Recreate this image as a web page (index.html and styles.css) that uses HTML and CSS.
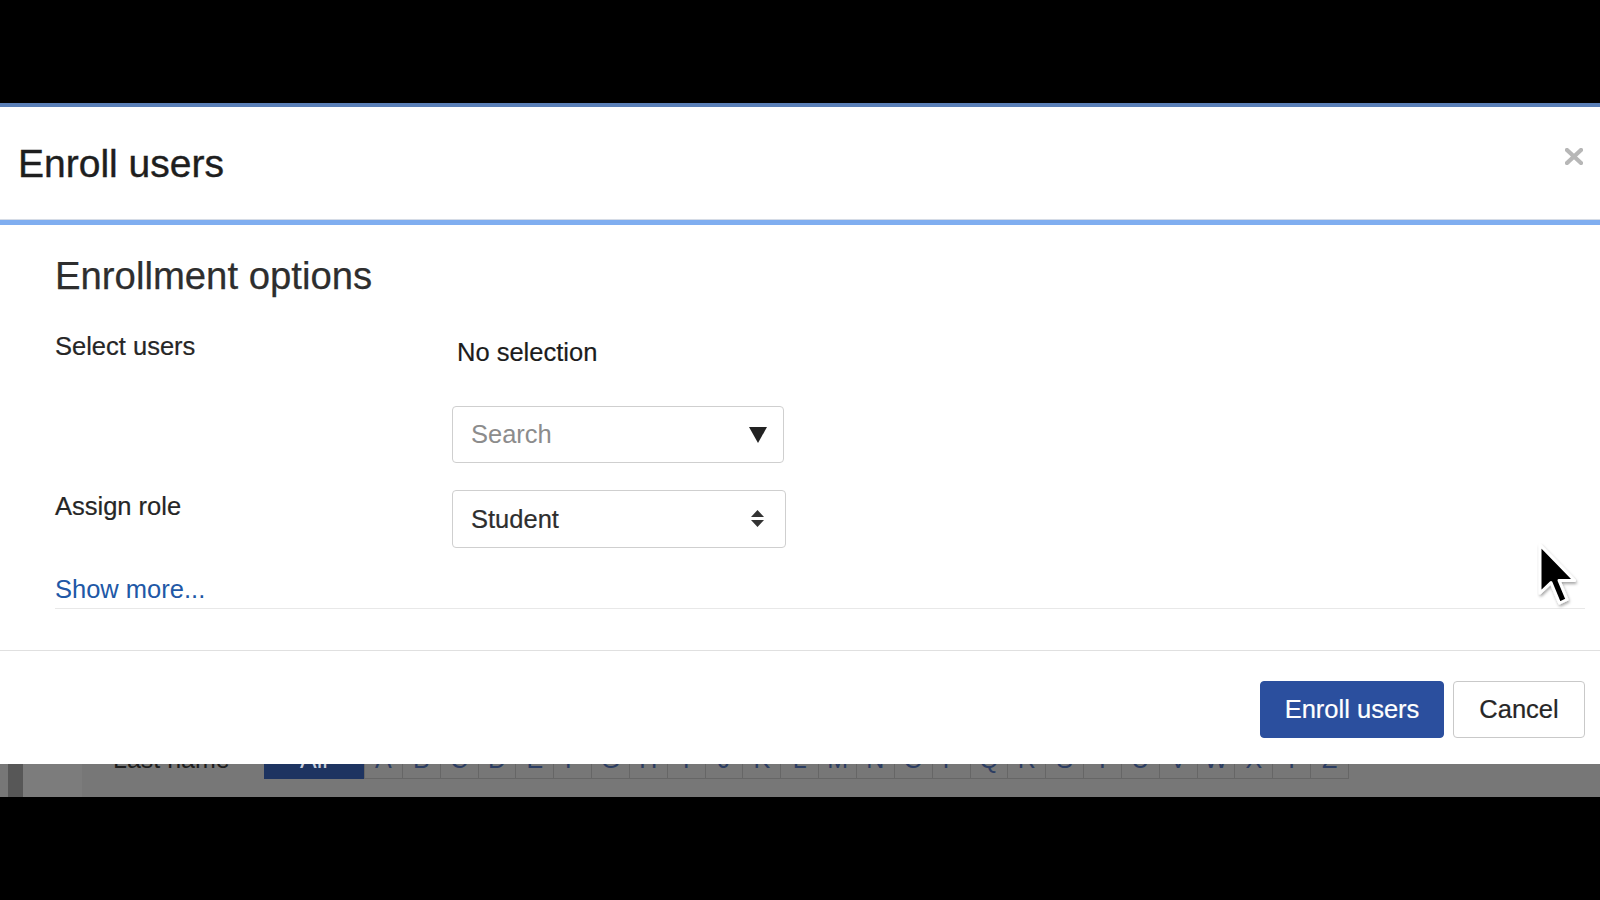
FILE: index.html
```html
<!DOCTYPE html>
<html lang="en">
<head>
<meta charset="utf-8">
<title>Enroll users</title>
<link rel="stylesheet" href="styles.css">
</head>
<body>
<div class="screen">
  <div class="top-black"></div>
  <div class="modal">
    <div class="modal-header">
      <h4 class="modal-title">Enroll users</h4>
      <button class="close" aria-label="Close">
        <svg width="18" height="17" viewBox="0 0 18 17"><path d="M2 2 L16 15 M16 2 L2 15" stroke="#b7b7b7" stroke-width="4.2" stroke-linecap="square" fill="none"/></svg>
      </button>
    </div>
    <div class="modal-body">
      <h3 class="section-title">Enrollment options</h3>
      <div class="form-row">
        <label class="form-label">Select users</label>
        <div class="form-field">
          <div class="static-text">No selection</div>
          <div class="search-box">
            <span class="placeholder">Search</span>
            <svg class="caret" width="18" height="16" viewBox="0 0 18 16"><path d="M0 0 H18 L9 16 Z" fill="#222"/></svg>
          </div>
        </div>
      </div>
      <div class="form-row row-role">
        <label class="form-label role-label">Assign role</label>
        <div class="form-field">
          <div class="select-box">
            <span class="select-value">Student</span>
            <svg class="updown" width="13" height="17" viewBox="0 0 13 17"><path d="M6.5 0 L13 7 H0 Z M0 10 H13 L6.5 17 Z" fill="#333"/></svg>
          </div>
        </div>
      </div>
      <div class="show-more"><a href="#" class="show-more-link">Show more...</a></div>
    </div>
    <div class="modal-footer">
      <button class="btn btn-primary">Enroll users</button>
      <button class="btn btn-secondary">Cancel</button>
    </div>
  </div>
  <div class="backdrop-strip">
    <div class="edge-gap"></div>
    <div class="edge-dark"></div>
    <div class="edge-light"></div>
    <div class="strip-content">
      <span class="lastname">Last name</span>
      <div class="initials">
        <span class="initial active">All</span>
        <span class="initial">A</span><span class="initial">B</span><span class="initial">C</span><span class="initial">D</span><span class="initial">E</span><span class="initial">F</span><span class="initial">G</span><span class="initial">H</span><span class="initial">I</span><span class="initial">J</span><span class="initial">K</span><span class="initial">L</span><span class="initial">M</span><span class="initial">N</span><span class="initial">O</span><span class="initial">P</span><span class="initial">Q</span><span class="initial">R</span><span class="initial">S</span><span class="initial">T</span><span class="initial">U</span><span class="initial">V</span><span class="initial">W</span><span class="initial">X</span><span class="initial">Y</span><span class="initial">Z</span>
      </div>
    </div>
  </div>
  <div class="bottom-black"></div>
  <svg class="cursor" width="44" height="68" viewBox="0 0 44 68">
    <defs>
      <filter id="cs" x="-30%" y="-30%" width="160%" height="160%">
        <feDropShadow dx="1" dy="2" stdDeviation="1.6" flood-color="#000" flood-opacity="0.35"/>
      </filter>
    </defs>
    <path d="M3 3 L3 51 L14 40.5 L22.5 61 L30 57.5 L22 38.5 L37.5 38.5 Z" fill="#000" stroke="#fff" stroke-width="3" stroke-linejoin="round" filter="url(#cs)"/>
  </svg>
</div>
</body>
</html>
```
FILE: styles.css
```css
* { box-sizing: border-box; }
html, body { margin: 0; padding: 0; }
body {
  background: #000;
  font-family: "Liberation Sans", Arial, Helvetica, sans-serif;
  color: #2a2a2a;
}
.screen {
  position: relative;
  width: 1600px;
  height: 900px;
  overflow: hidden;
  background: #000;
}
.top-black { height: 103px; background: #000; }

.modal { background: #fff; }
.modal-header {
  border-top: 4px solid #5a7fb7;
  border-bottom: 1px solid #d6dce6;
  height: 117px;
  padding: 34px 17px 0 18px;
  display: flex;
  justify-content: space-between;
  align-items: flex-start;
}
.modal-title {
  margin: 0;
  font-size: 39px;
  line-height: 46px;
  font-weight: 400;
  color: #1e1e1e;
  -webkit-text-stroke: 0.4px #1e1e1e;
}
.close {
  margin-top: 7px;
  padding: 0;
  border: 0;
  background: transparent;
  width: 18px;
  height: 17px;
  display: block;
}
.close svg { display: block; }

.modal-body {
  border-top: 5px solid #80aef0;
  padding: 28px 15px 41px 55px;
}
.section-title {
  margin: 0 0 32px;
  font-size: 38.3px;
  line-height: 46px;
  font-weight: 400;
  color: #2e2e2e;
  -webkit-text-stroke: 0.25px #2e2e2e;
}
.form-row {
  display: grid;
  grid-template-columns: 397px 1fr;
  align-items: start;
}
.form-label {
  font-size: 25.5px;
  line-height: 30px;
  color: #262626;
  -webkit-text-stroke: 0.2px #262626;
}
.role-label { margin-top: 1px; }
.row-role { margin-top: 27px; }
.static-text {
  margin-top: 6px;
  padding-left: 5px;
  font-size: 25.5px;
  line-height: 30px;
  color: #1c1c1c;
  -webkit-text-stroke: 0.2px #1c1c1c;
}
.search-box {
  margin-top: 39px;
  width: 332px;
  height: 57px;
  border: 1px solid #cfcfcf;
  border-radius: 4px;
  padding: 0 16px 0 18px;
  display: flex;
  align-items: center;
  justify-content: space-between;
}
.placeholder {
  font-size: 25.5px;
  color: #8c8c8c;
}
.caret { display: block; margin-top: 1px; }
.select-box {
  width: 334px;
  height: 58px;
  border: 1px solid #cfcfcf;
  border-radius: 4px;
  padding: 0 21px 0 18px;
  display: flex;
  align-items: center;
  justify-content: space-between;
}
.select-value {
  font-size: 25.5px;
  color: #2e2e2e;
  -webkit-text-stroke: 0.2px #2e2e2e;
}
.updown { display: block; margin-top: -2px; }

.show-more {
  margin-top: 26px;
  padding-bottom: 0;
  border-bottom: 1px solid #e8e8e8;
  line-height: 30px;
}
.show-more-link {
  font-size: 25.5px;
  color: #2158a6;
  text-decoration: none;
}

.modal-footer {
  border-top: 1px solid #e0e0e0;
  height: 114px;
  padding: 30px 15px 0;
  display: flex;
  justify-content: flex-end;
  align-items: flex-start;
  gap: 9px;
}
.btn {
  height: 57px;
  border-radius: 4px;
  font-family: "Liberation Sans", Arial, Helvetica, sans-serif;
  font-size: 25.5px;
  line-height: 1;
  padding: 0;
  display: flex;
  align-items: center;
  justify-content: center;
}
.btn-primary {
  width: 184px;
  background: #2b4f9e;
  border: 1px solid #2b4f9e;
  color: #fff;
  -webkit-text-stroke: 0.2px #fff;
}
.btn-secondary {
  width: 132px;
  background: #fff;
  border: 1px solid #c9c9c9;
  color: #262626;
  -webkit-text-stroke: 0.2px #262626;
}

.backdrop-strip {
  height: 33px;
  background: #777;
  display: flex;
  overflow: hidden;
}
.edge-gap { width: 8px; flex: none; }
.edge-dark { width: 15px; flex: none; background: #575757; }
.edge-light { width: 59px; flex: none; background: #7c7c7c; }
.strip-content {
  display: flex;
  align-items: flex-start;
  margin-top: -25px;
  padding-left: 31px;
  height: 60px;
}
.lastname {
  width: 151px;
  flex: none;
  font-size: 25px;
  line-height: 40px;
  color: #1e1e1e;
}
.initials { display: flex; }
.initial {
  width: 37.85px;
  height: 40px;
  flex: none;
  text-align: center;
  font-size: 25px;
  line-height: 40px;
  color: #2c3d62;
  border-right: 1px solid #666;
  border-bottom: 1px solid #666;
}
.initial.active {
  width: 101px;
  background: #1e3461;
  color: #c9cfdb;
  border-right: 1px solid #666;
  border-bottom: 0;
}
.bottom-black { height: 104px; background: #000; }

.cursor {
  position: absolute;
  left: 1537px;
  top: 542px;
}
```
